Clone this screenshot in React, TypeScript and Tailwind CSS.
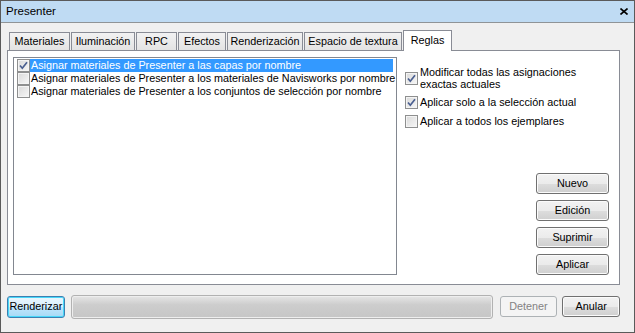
import type { ReactNode } from "react";

const tabs = [
  { label: "Materiales", w: "w-[61px]" },
  { label: "Iluminación", w: "w-[64px]" },
  { label: "RPC", w: "w-[41px]" },
  { label: "Efectos", w: "w-[48px]" },
  { label: "Renderización", w: "w-[76px]" },
  { label: "Espacio de textura", w: "w-[98px]" },
];

const rules = [
  { label: "Asignar materiales de Presenter a las capas por nombre", checked: true, selected: true },
  { label: "Asignar materiales de Presenter a los materiales de Navisworks por nombre", checked: false, selected: false },
  { label: "Asignar materiales de Presenter a los conjuntos de selección por nombre", checked: false, selected: false },
];

function Check({ checked }: { checked: boolean }) {
  return (
    <span className="flex h-[13px] w-[13px] shrink-0 items-center justify-center border border-[#8e8f8f] bg-[linear-gradient(135deg,#d9d9d9,#f7f7f7)] shadow-[inset_0_0_0_1px_#f4f4f4]">
      {checked && (
        <svg viewBox="0 0 11 11" className="h-[11px] w-[11px]">
          <path d="M2 5.5 L4.3 8.2 L9 2.2" stroke="#4a5f90" strokeWidth="1.7" fill="none" />
        </svg>
      )}
    </span>
  );
}

function Btn({ children, className = "", disabled = false }: { children: ReactNode; className?: string; disabled?: boolean }) {
  return (
    <button
      className={
        "flex h-[21px] items-center justify-center rounded-[3px] border text-[10.8px] " +
        (disabled
          ? "border-[#adb2b5] bg-[#f4f4f4] text-[#838383] "
          : "border-[#707070] bg-[linear-gradient(#f2f2f2_0%,#ebebeb_50%,#dddddd_51%,#cfcfcf_100%)] text-black shadow-[inset_0_0_0_1px_#fbfbfb] ") +
        className
      }
    >
      {children}
    </button>
  );
}

export default function App() {
  return (
    <div className="flex h-[333px] w-[635px] flex-col border border-[#5a5a5a] bg-[#f0f0f0] font-['Liberation_Sans',Arial,sans-serif] text-[10.8px] leading-[13px] text-black">
      <div className="flex h-[22px] shrink-0 items-center justify-between border-b border-[#8f9497] bg-[#bfdbf3] pl-[5px] pr-[6px]">
        <span className="text-[11.5px]">Presenter</span>
        <svg viewBox="0 0 8 7" className="h-[7px] w-[8px]">
          <path d="M0.5 0.5 L7.5 6.5 M7.5 0.5 L0.5 6.5" stroke="#000" strokeWidth="1.6" />
        </svg>
      </div>

      <div className="flex flex-1 flex-col pl-[6px] pr-[14px] pt-[6px]">
        <div className="flex h-[21px] items-end gap-px pl-[2px]">
          {tabs.map((t) => (
            <div
              key={t.label}
              className={`${t.w} flex h-[18px] items-center justify-center whitespace-nowrap border border-b-0 border-[#898c95] bg-[linear-gradient(#f2f2f2,#e3e3e3)]`}
            >
              {t.label}
            </div>
          ))}
          <div className="relative z-10 -mb-px flex h-[21px] w-[49px] items-start justify-center border border-b-0 border-[#898c95] bg-white pt-[3px]">
            Reglas
          </div>
        </div>

        <div className="flex h-[235px] border border-[#898c95] bg-white pb-[9px] pl-[5px] pr-[10px] pt-[6px]">
          <div className="flex h-full w-[384px] flex-col border border-[#828790] px-[3px] pt-px">
            {rules.map((r) => (
              <div key={r.label} className="flex h-[13px] items-center whitespace-nowrap">
                <Check checked={r.checked} />
                <span className={"flex h-[13px] flex-1 items-center pl-px " + (r.selected ? "bg-[#3399ff] text-white" : "")}>
                  {r.label}
                </span>
              </div>
            ))}
          </div>

          <div className="ml-[8px] flex flex-1 flex-col">
            <div className="mt-[9px] flex items-center gap-[2px]">
              <Check checked />
              <span className="leading-[12px]">
                Modificar todas las asignaciones
                <br />
                exactas actuales
              </span>
            </div>
            <div className="mt-[6px] flex items-center gap-[2px]">
              <Check checked />
              <span>Aplicar solo a la selección actual</span>
            </div>
            <div className="mt-[6px] flex items-center gap-[2px]">
              <Check checked={false} />
              <span>Aplicar a todos los ejemplares</span>
            </div>

            <div className="mt-auto flex flex-col items-end gap-[6px]">
              <Btn className="w-[73px]">Nuevo</Btn>
              <Btn className="w-[73px]">Edición</Btn>
              <Btn className="w-[73px]">Suprimir</Btn>
              <Btn className="w-[73px]">Aplicar</Btn>
            </div>
          </div>
        </div>

        <div className="mt-[10px] flex h-[23px] items-center">
          <button className="flex h-[22px] w-[58px] items-center justify-center rounded-[3px] border border-[#3c7fb1] bg-[linear-gradient(#eaf6fd_0%,#d9f0fc_50%,#bee6fd_51%,#a7d9f5_100%)] text-[10.8px] shadow-[inset_0_0_0_1px_#48d7f9]">
            Renderizar
          </button>
          <div className="ml-[6px] h-[24px] w-[424px] rounded-[3px] border border-[#b2b2b2] bg-[linear-gradient(#e6e6e6,#cdcdcd_40%,#c6c6c6)] shadow-[inset_0_0_0_1px_#eeeeee]" />
          <Btn disabled className="ml-[7px] w-[58px]">Detener</Btn>
          <Btn className="ml-[5px] w-[58px]">Anular</Btn>
        </div>
      </div>
    </div>
  );
}
